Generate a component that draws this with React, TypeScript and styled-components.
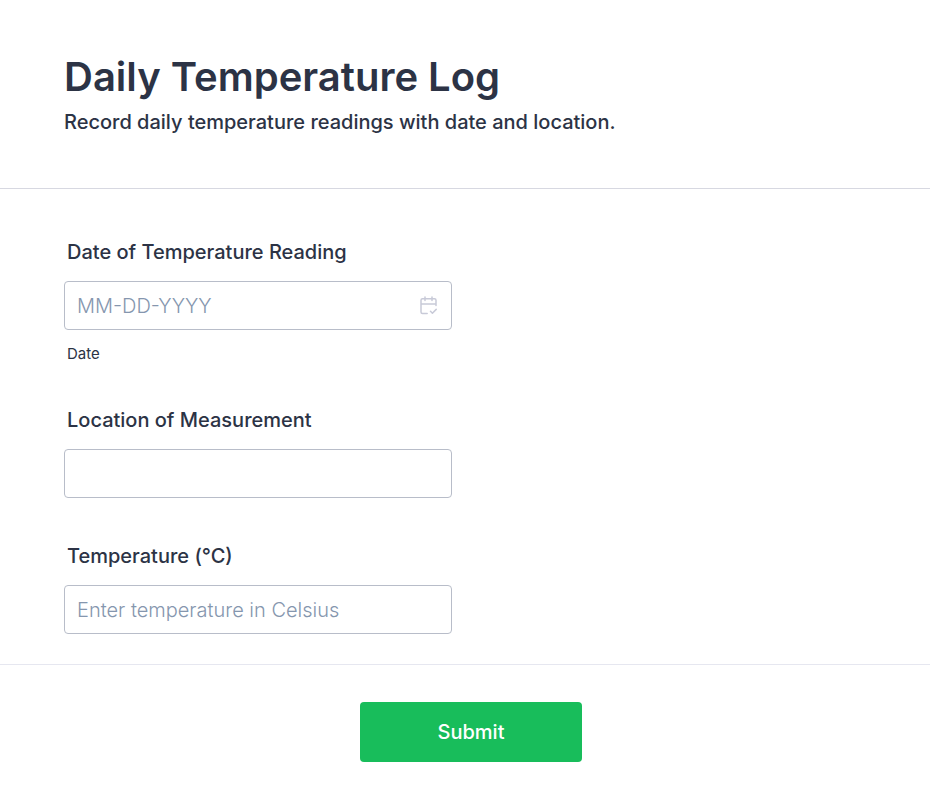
import React from "react";
import styled, { createGlobalStyle } from "styled-components";

const GlobalStyle = createGlobalStyle`
  *, *::before, *::after { box-sizing: border-box; }
  body {
    margin: 0;
    background: #fff;
    color: #2c3345;
    font-family: Inter, "Liberation Sans", sans-serif;
  }
`;

const Header = styled.header`
  padding: 52px 64px 54px;
  border-bottom: 1px solid #d7d8e1;
`;

const Title = styled.h1`
  margin: 0;
  font-size: 40px;
  line-height: 50px;
  font-weight: 600;
`;

const Subtitle = styled.p`
  margin: 8px 0 0;
  font-size: 20px;
  line-height: 24px;
  font-weight: 500;
`;

const Fields = styled.div`
  display: flex;
  flex-direction: column;
  gap: 46px;
  padding: 51px 64px 30px;
`;

const Field = styled.div`
  display: flex;
  flex-direction: column;
  max-width: 388px;
`;

const Label = styled.label`
  margin: 0 3px 17px;
  font-size: 20px;
  line-height: 24px;
  font-weight: 500;
`;

const InputWrap = styled.div`
  position: relative;
  display: flex;
`;

const TextInput = styled.input`
  width: 100%;
  height: 49px;
  padding: 0 12px;
  border: 1px solid #b8bdc9;
  border-radius: 4px;
  background: #fff;
  color: inherit;
  font: 300 20px Inter, "Liberation Sans", sans-serif;

  &::placeholder { color: #8596ae; opacity: 1; }
`;

const CalendarIcon = styled.svg`
  position: absolute;
  right: 15px;
  top: 15px;
  width: 17px;
  height: 19px;
`;

const Hint = styled.span`
  margin: 16px 3px 0;
  font-size: 15px;
  line-height: 16px;
`;

const Footer = styled.footer`
  display: flex;
  justify-content: center;
  padding: 37px 64px 48px 76px;
  border-top: 1px solid #e6e7f0;
`;

const SubmitButton = styled.button`
  width: 222px;
  height: 60px;
  border: 0;
  border-radius: 4px;
  background: #18bd5b;
  color: #fff;
  font: 500 20px Inter, "Liberation Sans", sans-serif;
`;

export default function App() {
  return (
    <>
      <GlobalStyle />
      <form onSubmit={(e) => e.preventDefault()}>
        <Header>
          <Title>Daily Temperature Log</Title>
          <Subtitle>Record daily temperature readings with date and location.</Subtitle>
        </Header>
        <Fields>
          <Field>
            <Label htmlFor="date">Date of Temperature Reading</Label>
            <InputWrap>
              <TextInput id="date" placeholder="MM-DD-YYYY" aria-describedby="date-hint" />
              <CalendarIcon viewBox="0 0 17 19" fill="none" stroke="#c8cad8" strokeWidth="1.5" strokeLinecap="round" strokeLinejoin="round" aria-hidden="true">
                <path d="M5 1v3.500M12 1v3.500M1 8h15M7.200 17.500H2.500A1.500 1.500 0 0 1 1 16V4.300A1.500 1.500 0 0 1 2.500 2.800h12A1.500 1.500 0 0 1 16 4.300V9.500M10.500 15.300l1.900 1.900 3.800-3.800" />
              </CalendarIcon>
            </InputWrap>
            <Hint id="date-hint">Date</Hint>
          </Field>
          <Field>
            <Label htmlFor="location">Location of Measurement</Label>
            <TextInput id="location" />
          </Field>
          <Field>
            <Label htmlFor="temperature">Temperature (°C)</Label>
            <TextInput id="temperature" placeholder="Enter temperature in Celsius" />
          </Field>
        </Fields>
        <Footer>
          <SubmitButton type="submit">Submit</SubmitButton>
        </Footer>
      </form>
    </>
  );
}
